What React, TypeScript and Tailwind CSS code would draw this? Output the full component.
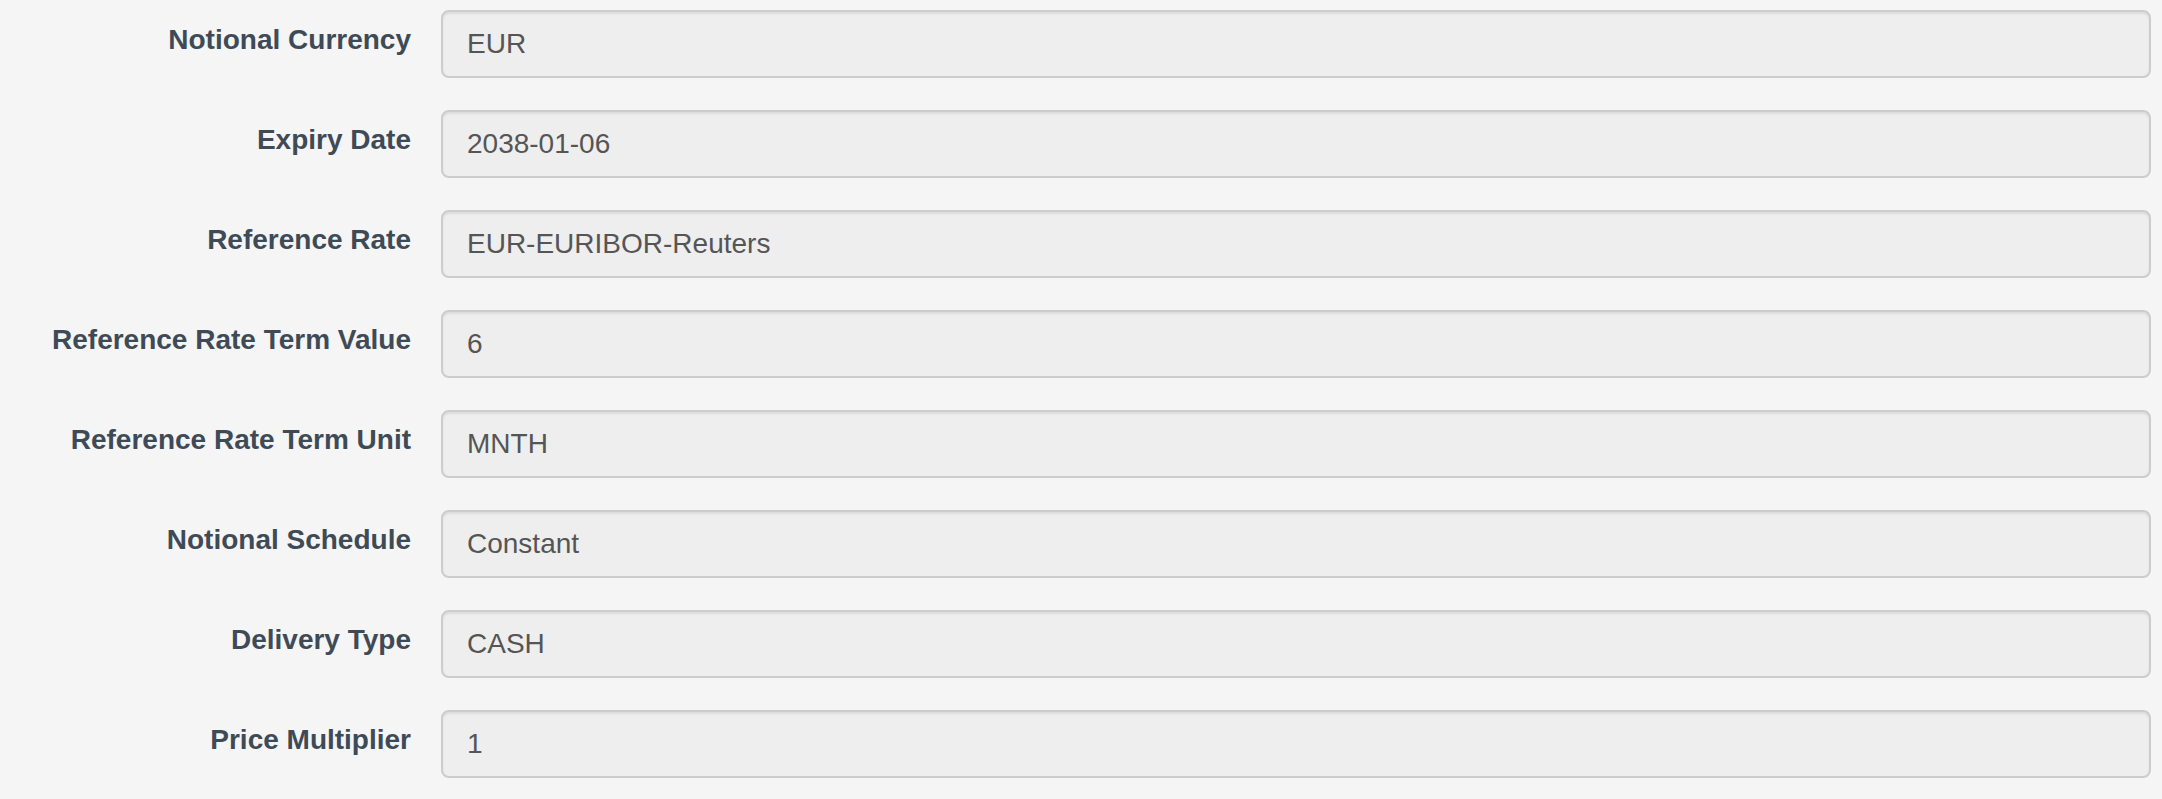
const fields: { label: string; value: string }[] = [
  { label: "Notional Currency", value: "EUR" },
  { label: "Expiry Date", value: "2038-01-06" },
  { label: "Reference Rate", value: "EUR-EURIBOR-Reuters" },
  { label: "Reference Rate Term Value", value: "6" },
  { label: "Reference Rate Term Unit", value: "MNTH" },
  { label: "Notional Schedule", value: "Constant" },
  { label: "Delivery Type", value: "CASH" },
  { label: "Price Multiplier", value: "1" },
];

function FieldRow({ label, value }: { label: string; value: string }) {
  return (
    <div className="flex items-start mb-[32px]">
      <label className="w-[441px] shrink-0 pr-[30px] pt-[10px] text-right text-[28px] leading-[40px] font-bold text-[#3e4b57]">
        {label}
      </label>
      <div className="flex-1 h-[68px] rounded-[8px] border-2 border-[#cccccc] bg-[#eeeeee] px-[24px] py-[12px] text-[28px] leading-[40px] text-[#555555] shadow-[inset_0_2px_2px_rgba(0,0,0,0.075)]">
        {value}
      </div>
    </div>
  );
}

export default function App() {
  return (
    <div
      className="min-h-[799px] bg-[#f5f5f5] pt-[10px] pr-[11px]"
      style={{ fontFamily: '"Liberation Sans", Arial, Helvetica, sans-serif' }}
    >
      {fields.map((f) => (
        <FieldRow key={f.label} label={f.label} value={f.value} />
      ))}
    </div>
  );
}
